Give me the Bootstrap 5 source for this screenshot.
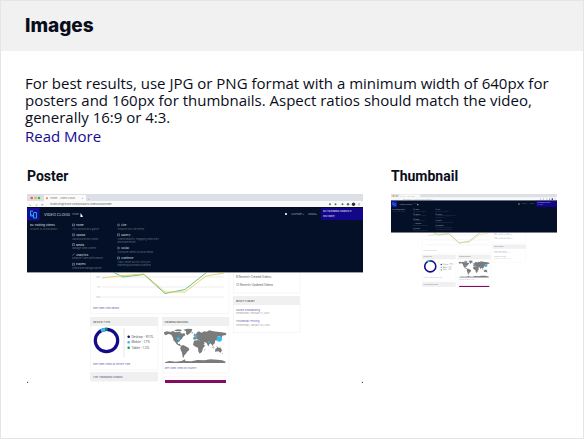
<!DOCTYPE html>
<html lang="en">
<head>
<meta charset="utf-8">
<meta name="viewport" content="width=device-width, initial-scale=1">
<title>Images</title>
<link href="https://cdn.jsdelivr.net/npm/bootstrap@5.3.0/dist/css/bootstrap.min.css" rel="stylesheet">
<style>
  body { font-family: Inter, "Liberation Sans", sans-serif; color: #090d1a; background: #fff; }
  .image-panel { border: 1px solid #e5e5e5; }
  .panel-head { background: #f1f1f1; padding: 13px 24px; }
  .panel-head h1 { font-size: 19px; line-height: 24px; font-weight: 800; }
  .panel-copy { padding: 24px 24px 0; font-family: "Open Sans", "Noto Sans", sans-serif; font-size: 15px; line-height: 17px; }
  .panel-copy a { color: #150b8c; line-height: 20px; }
  .previews { padding: 20px 26px; gap: 28px; }
  .preview-title { font-family: Roboto, "Liberation Sans", sans-serif; font-size: 14px; line-height: 20px; margin-bottom: 8px; }
  .poster-col { flex: 336 1 0; --ink: .8; }
  .thumb-col { flex: 166 1 0; --ink: .6; }
  .shot { width: 100%; height: auto; }
  .shot text { font-family: Inter, "Liberation Sans", sans-serif; opacity: var(--ink); }
  .shot .wordmark { font-family: Roboto, "Liberation Sans", sans-serif; }
</style>
<script src="https://cdn.jsdelivr.net/npm/bootstrap@5.3.0/dist/js/bootstrap.bundle.min.js"></script>
</head>
<body>
<main class="image-panel min-vh-100">
  <header class="panel-head"><h1 class="m-0">Images</h1></header>
  <div class="panel-copy">
    <p class="m-0">For best results, use JPG or PNG format with a minimum width of 640px for posters and 160px for thumbnails. Aspect ratios should match the video, generally 16:9 or 4:3.</p>
    <a href="#" class="text-decoration-none">Read More</a>
  </div>
  <div class="previews d-flex align-items-start">
    <section class="poster-col">
      <h2 class="preview-title fw-bold">Poster</h2>
      <svg class="shot d-block" viewBox="0 0 336 189" role="img" aria-label="Poster">
        <g id="studio">
          <rect width="336" height="189" fill="#fff"/>
          <!-- views chart -->
          <g fill="none" stroke="#f2f2f2" stroke-width=".7">
            <path d="M63.500 78V119.500H202V78M206.500 78V99H273V78M63.500 123V176H131V123M135.500 123V179H202V123M206.500 102V138.500H273V102M135.500 189V183H202V189"/>
            <path stroke="#e5e5e5" d="M75 83H197M75 93H197M75 103H197"/>
            <path d="M97 134V163" stroke="#ddd"/>
          </g>
          <g font-size="2.500" fill="#aaa"><text x="69" y="84">100</text><text x="70" y="94">75</text><text x="69" y="104">500</text></g>
          <path d="M86 78L96 83L117 80.500L138 99.500L158 95.500L180 78" fill="none" stroke="#55b978" stroke-width=".9"/>
          <path d="M75 84L96 81.500L117 80L138 98L158 98L179 82L197 79" fill="none" stroke="#e6cf5a" stroke-width=".9"/>
          <!-- section headers -->
          <path d="M63 123H131V132H63ZM135 123H202V132H135ZM63 178H131V187.500H63ZM206 102H273V111H206Z" fill="#f0f0f0"/>
          <g font-size="2.600" font-weight="600" fill="#444">
            <text x="66" y="128.500">DEVICE TYPE</text><text x="137.500" y="128.500">VIEWING REGIONS</text><text x="209" y="107.500">WHAT'S NEW?</text>
            <text x="66" y="183.700" fill="#4a4688">TOP TRENDING VIDEOS</text>
          </g>
          <g font-size="2.400" fill="#3730a3">
            <text x="66" y="115.300">See Video View Details</text><text x="66" y="170.500">See Video Views by Device Type</text><text x="137.500" y="175">See Video Views by Country</text>
            <text x="209" y="116.500" font-size="2.700">Studio Onboarding</text><text x="209" y="128" font-size="2.700">Thumbnail Testing</text>
          </g>
          <g font-size="2.800" fill="#333">
            <text x="209" y="83.500">8 Recently Created Videos</text><text x="209" y="91.500">12 Recently Updated Videos</text>
            <g fill="#888" font-size="2.400"><text x="209" y="120">Wednesday, February 3, 2021</text><text x="209" y="131.800">Wednesday, January 20, 2021</text></g>
          </g>
          <!-- device donut -->
          <g fill="none" stroke-width="3.200">
            <circle cx="79.500" cy="146.500" r="11.200" stroke="#130b8a"/>
            <path d="M73.900 136.800A11.200 11.200 0 0 1 78.500 135.350" stroke="#36b9f2"/>
            <path d="M78.300 135.360A11.200 11.200 0 0 1 80.500 135.350" stroke="#168f62"/>
          </g>
          <circle cx="101.700" cy="142.700" r="1.300" fill="#130b8a"/><circle cx="101.700" cy="148.300" r="1.300" fill="#2fb7f5"/><circle cx="101.700" cy="153.700" r="1.300" fill="#149b5c"/>
          <g font-size="2.900" fill="#222"><text x="104.500" y="143.700">Desktop - 91.1%</text><text x="104.500" y="149.300">Mobile - 7.7%</text><text x="104.500" y="154.700">Tablet - 1.3%</text></g>
          <!-- world map -->
          <g transform="translate(123 71) scale(.3333)">
            <g fill="#7b7b7b">
              <path d="M42 202L50 199 62 201 68 198 77 202 90 200 96 206 103 204 106 211 99 215 96 221 91 225 88 230 83 231 84 237 89 236 93 242 89 243 80 238 75 230 71 227 69 218 64 209 55 207 47 211 43 208Z"/>
              <path d="M72 196L84 193 97 195 91 199 79 199ZM100 194L113 191 127 192 124 201 117 207 112 211 108 206 108 199Z"/>
              <path d="M92 243L99 240 107 244 116 249 118 254 111 261 107 267 102 272 101 279 98 276 96 263 91 252Z"/>
              <path d="M130 223L130 217 135 215 133 211 138 208 140 203 147 199 154 203 163 199 170 200 178 196 190 199 202 200 215 202 229 204 228 210 217 212 215 219 209 213 202 215 204 222 198 228 195 225 195 234 189 239 191 247 186 240 182 235 177 239 175 245 170 234 162 230 164 237 157 240 151 229 146 225 140 222 135 224Z"/>
              <path d="M132 227L144 225 155 229 162 240 166 241 159 250 156 260 149 266 145 259 144 248 136 245 129 239Z"/>
              <path d="M196 252L204 247 207 249 211 247 216 256 212 263 205 259 195 260ZM183 245L195 249 190 250ZM198 243L207 248 202 248ZM164 252L166 253 163 260ZM132 207L135 205 136 212 131 213ZM207 219L211 216 208 226 204 227ZM124 203L129 202 129 205 124 205ZM215 264L218 264 217 267Z"/>
              <path d="M45 292L58 288 77 290 95 288 105 283 106 288 124 289 143 285 163 286 181 283 202 284 217 286 228 291 224 294 45 294Z"/>
            </g>
            <g fill="#35bbf3"><circle cx="85" cy="221" r="5"/><circle cx="88" cy="206" r="2"/><circle cx="136" cy="212" r="3.500"/><circle cx="138" cy="218" r="3"/><circle cx="142" cy="213" r="2"/><circle cx="176" cy="232" r="3"/><circle cx="208" cy="222" r="8"/></g>
          </g>
          <path d="M138 186H199V189H138Z" fill="#850c63"/>
          <path d="M0 187.500L1.500 189H0ZM336 187.500V189H334.500Z" fill="#333"/>
          <!-- browser chrome -->
          <rect width="336" height="7.500" fill="#dce0e6"/>
          <path d="M17 7.500V2Q17 1 18 1H58Q59 1 59 2V7.500Z" fill="#fafafa"/>
          <rect y="7" width="336" height="6" fill="#f9f9fa"/>
          <circle cx="4.700" cy="4" r="1.300" fill="#ee5c54"/><circle cx="8.500" cy="4" r="1.300" fill="#e9b62d"/><circle cx="12" cy="4" r="1.300" fill="#37b94b"/>
          <circle cx="20" cy="4.300" r="1" fill="#e87a24"/>
          <g font-size="2.600" fill="#555"><text x="23" y="5.300">Home - Video Cloud</text><text x="54.500" y="5.300">×</text><text x="61" y="5.500">+</text><text x="2" y="11.500">←</text><text x="8" y="11.500">→</text><text x="14" y="11.500">⟳</text><text x="23" y="11.400" fill="#333">studio.brightcove.com/products/videocloud/home</text></g>
          <g fill="#666"><circle cx="303" cy="10.300" r="1"/><circle cx="308.500" cy="10.300" r="1"/><circle cx="315.500" cy="10.300" r="1"/><circle cx="321" cy="10.300" r="1.200"/><circle cx="326.500" cy="10.300" r="1.700" fill="#302a40"/><rect x="331.700" y="9" width=".6" height="2.600"/></g>
          <!-- site menu -->
          <rect y="13" width="336" height="65" fill="#031027"/>
          <rect y="78" width="336" height=".8" fill="#858590"/>
          <rect y="14" width="12.500" height="12.500" fill="#170c98"/>
          <path d="M6 17H3.500V22H6M7 18.500H9.500V24H6.500V18.500M3.500 20L6 22" fill="none" stroke="#18aee0"/>
          <text class="wordmark" x="17" y="21.500" font-size="4.200" fill="#e4e7ec">VIDEO CLOUD</text>
          <text x="45" y="21" font-size="2.300" fill="#aeb5c0">HOME</text>
          <path d="M53.500 19L56 22.500 55 23H53.500Z" fill="#fff"/>
          <path d="M294 14H336V26H294Z" fill="#12068a"/>
          <g fill="#fff" font-size="2.500" font-weight="600"><text x="296" y="18.200">BC TRAINING VIDEOS ▾</text><text x="296" y="22.800" font-size="2.400" font-weight="400">Bob Bailey</text></g>
          <g fill="#c5cad2" font-size="2.300"><circle cx="259" cy="20" r="1.100" fill="#fff"/><text x="264.500" y="21">SUPPORT ▾</text><text x="281" y="21">ADMIN ▾</text></g>
          <g fill="#dfe3ea" font-size="2.700" font-weight="600">
            <text x="3" y="32">BC Training Videos</text>
            <text x="49" y="32">Home</text><text x="49" y="41.800">Upload</text><text x="49" y="51.700">Media</text><text x="49" y="61.500">Analytics</text><text x="49" y="71.400">Players</text>
            <text x="94" y="32">Live</text><text x="94" y="41.800">Gallery</text><text x="94" y="55">Social</text><text x="94" y="65">Audience</text>
          </g>
          <g fill="none" stroke="#a3aab8" stroke-width=".5"><path d="M45.500 30H47.500V32H45.500ZM45.500 39.800H47.500V41.800H45.500ZM45.500 49.600H47.500V51.600H45.500ZM45.500 61.500L47.500 59.500M45.500 69.300H47.500V71.300H45.500ZM90.500 39.800H92.500V41.800H90.500ZM90.500 63H92.500V65H90.500Z"/><circle cx="91.500" cy="31" r="1"/><circle cx="91.500" cy="54" r="1"/></g>
          <g fill="#7e8796" font-size="2.300">
            <text x="3" y="35.800">Account ID 20318290001</text>
            <text x="45" y="35.800">Your account at a glance</text><text x="45" y="45.500">Add and process videos</text><text x="45" y="55.300">Manage video content</text><text x="45" y="65.200">Measure video performance</text><text x="45" y="75">Create and manage players</text>
            <text x="90.500" y="35.800">Produce your live events</text><text x="90.500" y="45.500">Create beautiful, engaging video sites</text><text x="90.500" y="49">and experiences</text><text x="90.500" y="58.800">Distribute videos to social media</text><text x="90.500" y="68.500">Track viewer activity with your</text><text x="90.500" y="72">marketing automation platform</text>
          </g>
        </g>
      </svg>
    </section>
    <section class="thumb-col">
      <h2 class="preview-title fw-bold">Thumbnail</h2>
      <svg class="shot d-block" viewBox="0 0 336 189" role="img" aria-label="Thumbnail"><use href="#studio"/></svg>
    </section>
  </div>
</main>
</body>
</html>
